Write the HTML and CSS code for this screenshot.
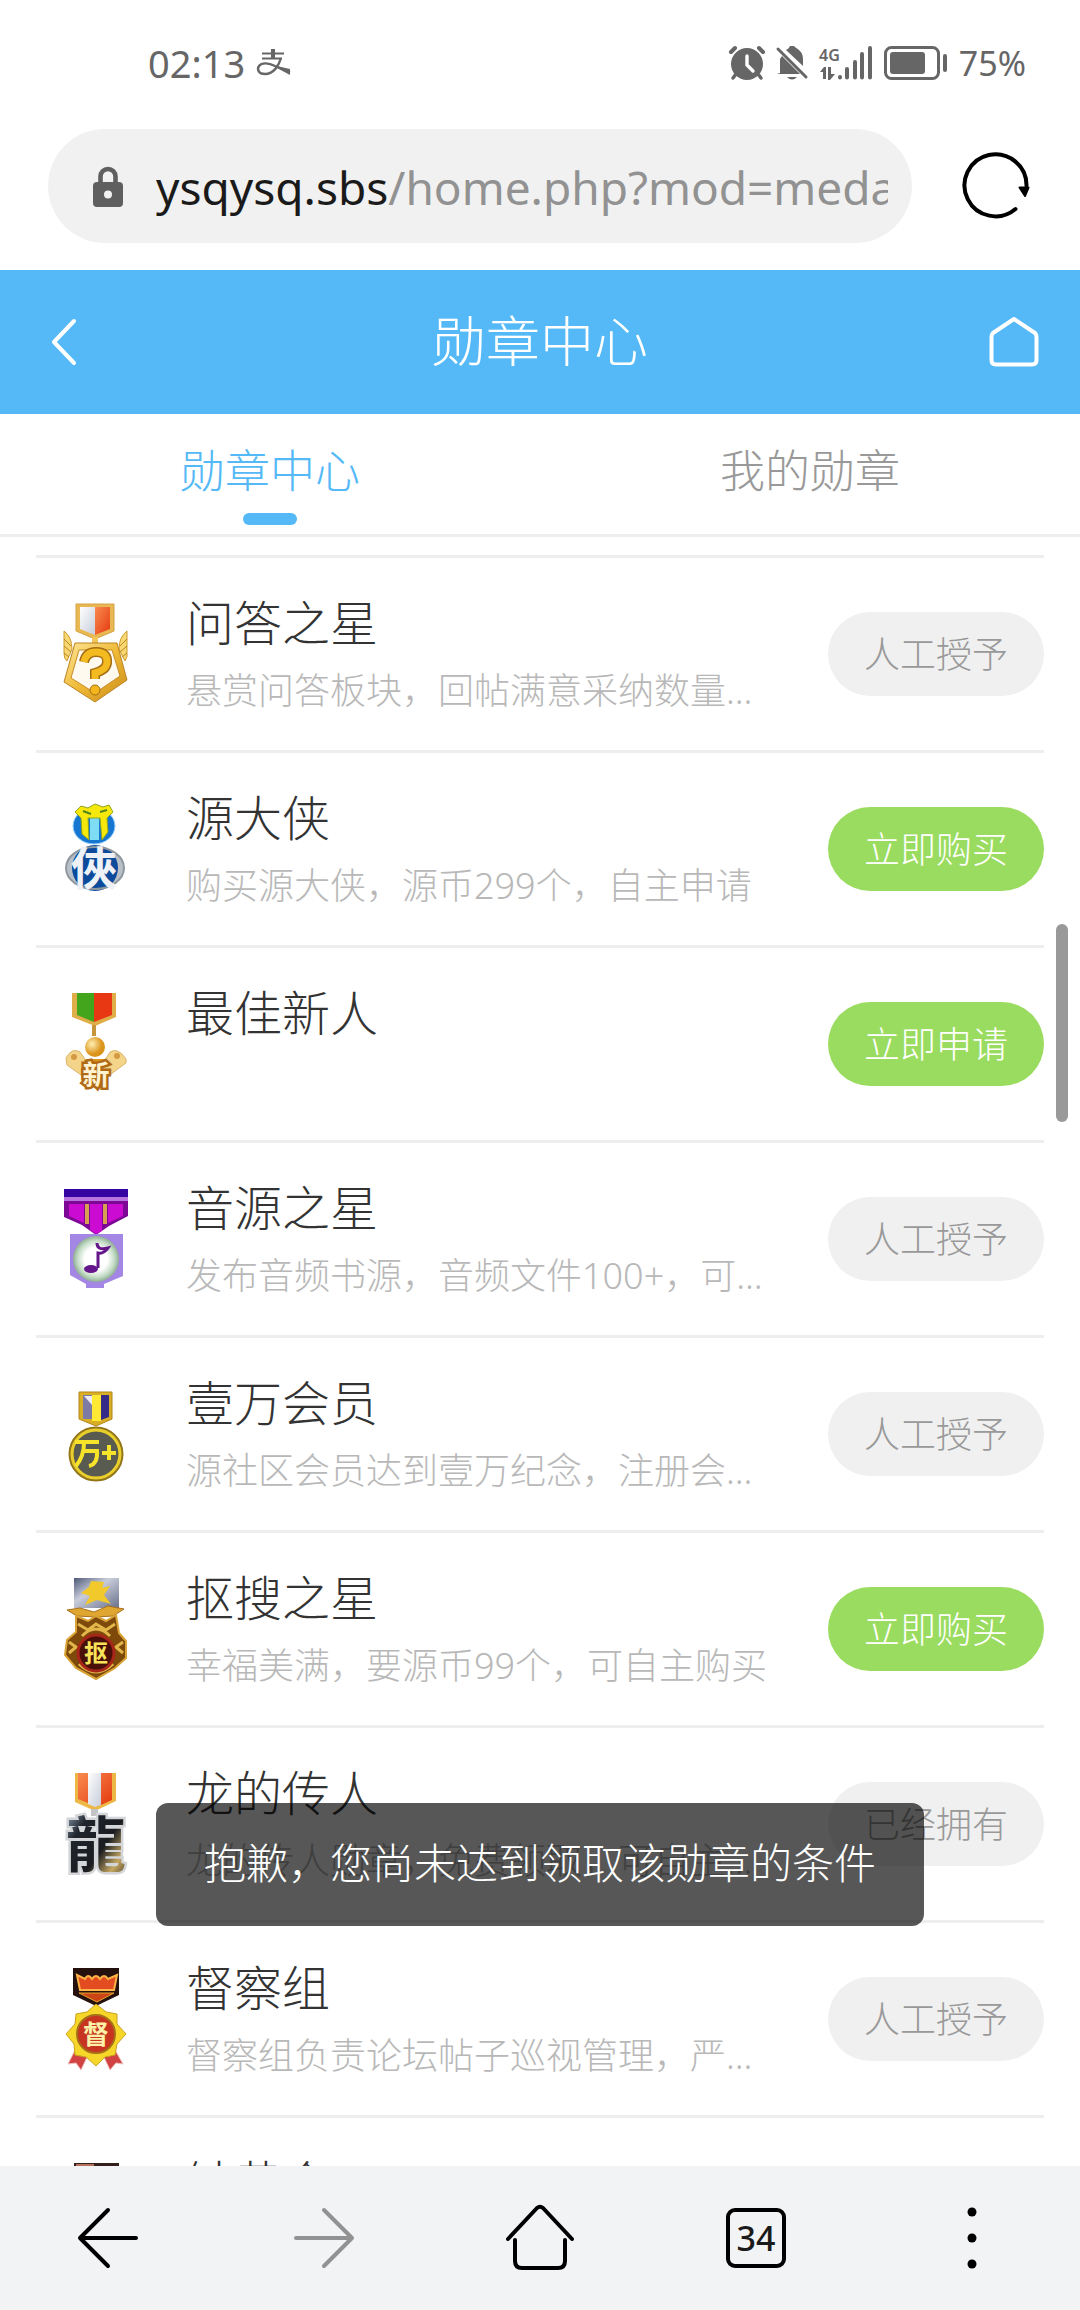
FILE: index.html
```html
<!DOCTYPE html>
<html lang="zh-CN">
<head>
<meta charset="utf-8">
<meta name="viewport" content="width=device-width, initial-scale=1">
<title>勋章中心</title>
<link rel="stylesheet" href="styles.css">
</head>
<body>
<div class="statusbar">
  <div class="status-left">
    <span class="clock">02:13</span>
    <svg class="pay-icon" width="34" height="27" viewBox="0 0 34 27" fill="none" stroke="#666"><path d="M5 4.500h22M5 9.500h20" stroke-width="2"/><path d="M16 0v10" stroke-width="4"/><path d="M24 9C22 16 17 25 8 25C1 25 0 20 2 17C5 13 12 14 18 17L33 23" stroke-width="2.400"/><path d="M17 16.500L33 20v6L20 19z" fill="#666" stroke="none"/></svg>
  </div>
  <div class="status-right">
    <svg width="36" height="34" viewBox="0 0 36 34"><circle cx="18" cy="18" r="16" fill="#666"/><path d="M2 6L6 2M34 6L30 2" stroke="#666" stroke-width="4" stroke-linecap="round"/><path d="M7 28L4 32M29 28L32 32" stroke="#666" stroke-width="3.500" stroke-linecap="round"/><path d="M18 10v9l6 6" stroke="#fff" stroke-width="3.400" fill="none" stroke-linecap="round"/></svg>
    <svg width="32" height="34" viewBox="0 0 32 34" fill="#666"><path d="M4 27V13L6 10L24 28H1zM10 4C12 3 13 2 14 0h4C20 3 27 4 27 13v7zM11 31h10q-5 5-10 0z"/><path d="M2 3L30 31" stroke="#666" stroke-width="3" stroke-linecap="round"/></svg>
    <svg width="54" height="34" viewBox="0 0 54 34" fill="#666"><text class="net" x="0" y="15">4G</text><path d="M1 26L5 21h2v12H4v-7zM9 21h3v7h4l-5 6H9z"/><g stroke="#666" stroke-width="4" stroke-linecap="round"><path d="M21 31v.500M28 23v8.500M36 16v15.500M43 8v23.500M51 2v29.500"/></g></svg>
    <svg width="64" height="34" viewBox="0 0 64 34"><rect x="1.500" y="1.500" width="53" height="31" rx="6" fill="none" stroke="#666" stroke-width="3"/><rect x="6" y="6" width="35" height="22" rx="3" fill="#666"/><rect x="59" y="8" width="4" height="18" rx="2" fill="#666"/></svg>
    <span class="battery-text">75%</span>
  </div>
</div>

<div class="addressbar">
  <button class="urlbox" type="button" aria-label="地址栏">
    <svg width="30" height="40" viewBox="0 0 30 40"><path d="M7.500 18V9.500a7.500 7.500 0 0 1 15 0V18" fill="none" stroke="#5f5f5f" stroke-width="4.600"/><rect y="15" width="30" height="25" rx="4" fill="#5f5f5f"/><circle cx="15" cy="27.500" r="4" fill="#f2f2f2"/></svg>
    <span class="url"><span class="host">ysqysq.sbs</span>/home.php?mod=medal</span>
  </button>
  <button class="reload" type="button" aria-label="刷新">
    <svg width="68" height="68" viewBox="0 0 68 68" fill="none" stroke="#000" stroke-width="4" stroke-linecap="round"><path d="M53.500 57A31 31 0 1 1 64.500 34"/><path d="M57.500 35.500h9L63 44z" fill="#000" stroke-width="2" stroke-linejoin="round"/></svg>
  </button>
</div>

<header class="titlebar">
  <a class="title-link" href="#back" aria-label="返回"><svg width="26" height="48" viewBox="0 0 26 48" fill="none" stroke="#fff" stroke-width="4" stroke-linecap="round" stroke-linejoin="round"><path d="M23 3L3 24L23 45"/></svg></a>
  <h1>勋章中心</h1>
  <a class="title-link" href="#home" aria-label="首页"><svg width="50" height="50" viewBox="0 0 50 50" fill="none" stroke="#fff" stroke-width="4" stroke-linejoin="round"><path d="M25 2L46 16Q47.500 17.500 47.500 20V43Q47.500 47.500 43 47.500H7Q2.500 47.500 2.500 43V20Q2.500 17.500 4 16z"/></svg></a>
</header>

<nav class="tabs">
  <a class="tab active" href="#center">勋章中心</a>
  <a class="tab" href="#mine">我的勋章</a>
</nav>

<svg class="defs" width="0" height="0" aria-hidden="true">
  <defs>
    <linearGradient id="gold" x1="0" y1="0" x2="1" y2="1"><stop offset="0" stop-color="#ffe79a"/><stop offset=".5" stop-color="#eeb935"/><stop offset="1" stop-color="#c98a18"/></linearGradient>
    <linearGradient id="red" x1="0" y1="0" x2="1" y2="1"><stop offset="0" stop-color="#f98b4e"/><stop offset="1" stop-color="#e43a10"/></linearGradient>
    <linearGradient id="silver" x1="0" y1="0" x2="1" y2="1"><stop offset="0" stop-color="#ffffff"/><stop offset="1" stop-color="#c6ccd8"/></linearGradient>
    <linearGradient id="steel" x1="0" y1="0" x2="1" y2="1"><stop offset="0" stop-color="#4c5876"/><stop offset=".4" stop-color="#c9cddb"/><stop offset="1" stop-color="#69708a"/></linearGradient>
    <linearGradient id="ink" x1="0" y1="0" x2="1" y2="1"><stop offset="0" stop-color="#b9d3ea"/><stop offset=".3" stop-color="#20242c"/><stop offset=".6" stop-color="#1a1c20"/><stop offset=".8" stop-color="#c5a763"/><stop offset="1" stop-color="#2d281c"/></linearGradient>
    <radialGradient id="pearl"><stop offset=".5" stop-color="#ffffff"/><stop offset=".8" stop-color="#c4dcc6"/><stop offset="1" stop-color="#8fae94"/></radialGradient>
    <radialGradient id="ball" cx=".35" cy=".35"><stop offset="0" stop-color="#fff0b4"/><stop offset="1" stop-color="#dc951c"/></radialGradient>
  </defs>
</svg>

<main class="content">
<ul class="medals">
  <li class="medal">
    <svg class="badge" viewBox="0 0 64 102">
      <path d="M0 28Q8 34 8 46L3 58Q0 56 0 50zM63 28Q55 34 55 46L61 58Q64 54 63 48z" fill="#f7d872" stroke="#cf9a2c"/>
      <path d="M0 36l7 7M0 43l7 6M0 50l5 4M63 36l-7 7M63 43l-7 6M63 50l-5 4" stroke="#b98321"/>
      <path d="M12 1h38v27L31 36L12 28z" fill="#eab853" stroke="#d3a244"/>
      <path d="M16 4h15v28l-15-6z" fill="url(#silver)"/><path d="M31 4h15v22l-15 6z" fill="url(#red)"/>
      <path d="M28 34h6v8h-6z" fill="#f0c65a"/>
      <path d="M11 40h42l10 37L31 99L0 79z" fill="url(#gold)" stroke="#bb8424"/>
      <path d="M15 47h33l8 26L31 90L7 75z" fill="#fffaf0" stroke="#c78d27"/>
      <path d="M20 59Q22 49 32 49Q44 49 43 60Q42 67 31 70v6" fill="none" stroke="#a66d12" stroke-width="10"/>
      <path d="M20 59Q22 49 32 49Q44 49 43 60Q42 67 31 70v6" fill="none" stroke="#f3bb20" stroke-width="7"/>
      <circle cx="31" cy="87" r="5" fill="#f3b61c" stroke="#a66d12"/>
    </svg>
    <div class="info"><h2>问答之星</h2><p>悬赏问答板块，回帖满意采纳数量达到要求</p></div>
    <button class="action" type="button">人工授予</button>
  </li>
  <li class="medal">
    <svg class="badge" viewBox="0 0 64 102">
      <ellipse cx="30" cy="28" rx="21" ry="18" fill="#1677d2" stroke="#9ad2fa"/>
      <path d="M26 15h9v27h-9z" fill="#7fdcf5"/>
      <path d="M11 14L17 8L24 10L31 6L39 9L45 7L49 14L43 20L44 34L38 42L36 20H24L25 42L18 36L17 20z" fill="#f7e80c" stroke="#8fa51d"/>
      <path d="M19 13l8 3M36 14l7-2" stroke="#52861f" stroke-width="2"/>
      <ellipse cx="31" cy="70" rx="29" ry="21" fill="#b9c0c8"/>
      <circle cx="31" cy="70" r="23" fill="#0c4a9c"/>
      <ellipse cx="31" cy="70" rx="29" ry="21" fill="none" stroke="#8f989f" stroke-width="2"/>
      <text class="glyph silver" x="30" y="87">俠</text>
    </svg>
    <div class="info"><h2>源大侠</h2><p>购买源大侠，源币299个，自主申请</p></div>
    <button class="action go" type="button">立即购买</button>
  </li>
  <li class="medal">
    <svg class="badge" viewBox="0 0 64 102">
      <path d="M8 0h44v24L31 33L8 24z" fill="#dfae48"/><path d="M13 0h17v29l-17-7z" fill="#43a51c"/><path d="M30 0h18v22l-18 7z" fill="#e83713"/>
      <path d="M30 32v11" stroke="#c7953a" stroke-width="4"/>
      <path d="M2 65Q8 54 16 59L25 72L20 84L3 72zM62 66Q54 54 46 59L38 72L43 84L62 70z" fill="#f3d489" stroke="#dcb46a"/>
      <circle cx="10" cy="64" r="3" fill="#d49943"/><circle cx="53" cy="63" r="3" fill="#d49943"/>
      <circle cx="31" cy="54" r="10" fill="url(#ball)"/>
      <path d="M22 66h20v8H22z" fill="#dc951c"/>
      <text class="glyph newbie" x="32" y="92">新</text>
    </svg>
    <div class="info"><h2>最佳新人</h2></div>
    <button class="action go" type="button">立即申请</button>
  </li>
  <li class="medal">
    <svg class="badge" viewBox="0 0 64 102">
      <path d="M0 1h64v9H0z" fill="#3405a0"/><path d="M0 9h64v4H0z" fill="#b875dd"/>
      <path d="M0 13h64v15L45 38L32 47L18 37L0 29z" fill="#7d0895"/><path d="M5 16h15v19L5 28zM26 16h12v27l-6 3l-6-4zM44 16h15v12l-15 7z" fill="#cb0bd2"/>
      <path d="M23 16v20M41 16v20" stroke="#d8a050" stroke-width="4"/>
      <path d="M6 46h53v42L40 96v4H22v-4L6 87z" fill="#a486e5"/>
      <circle cx="32" cy="71" r="23" fill="url(#pearl)"/>
      <path d="M33 55q0 8 11 5q-4 6-10 5v15" fill="none" stroke="#65168b" stroke-width="3"/><ellipse cx="27" cy="81" rx="7" ry="4" fill="#65168b"/>
    </svg>
    <div class="info"><h2>音源之星</h2><p>发布音频书源，音频文件100+，可申请获得</p></div>
    <button class="action" type="button">人工授予</button>
  </li>
  <li class="medal">
    <svg class="badge" viewBox="0 -9 64 102">
      <path d="M15 0h33v27L32 34L15 27z" fill="#d8ae24" stroke="#b3851e"/><path d="M19 3h9v24h-9z" fill="#7d7ba6"/><path d="M20 4h8v9z" fill="#eceaf6"/><path d="M28 3h9v26h-9z" fill="#ffe935"/><path d="M37 3h8v22l-8 3z" fill="#352a88"/>
      <circle cx="32" cy="62" r="25" fill="#595b50" stroke="#927619" stroke-width="5"/>
      <circle cx="32" cy="62" r="24" fill="none" stroke="#e8cf2d" stroke-width="3"/>
      <path d="M11 50h24M20 51Q20 64 12 74M20 59h13Q34 72 25 74" fill="none" stroke="#f7e32a" stroke-width="4"/>
      <path d="M45 53v15M38 61h14" stroke="#f7e32a" stroke-width="4"/>
    </svg>
    <div class="info"><h2>壹万会员</h2><p>源社区会员达到壹万纪念，注册会员均可获得</p></div>
    <button class="action" type="button">人工授予</button>
  </li>
  <li class="medal">
    <svg class="badge" viewBox="0 0 64 102">
      <path d="M10 0h45v30H10z" fill="url(#steel)"/>
      <path d="M17 15L25 9L27 3L40 4L38 10L46 8L40 17L47 26L33 22L21 27L26 18z" fill="#f1c92b"/>
      <path d="M3 32L16 30L30 34L44 28L60 31L49 38L32 39L13 38z" fill="#dfa631" stroke="#a9701a"/>
      <path d="M12 38L24 43L32 38L42 43L52 37L55 55L62 63V80L51 90L32 101L12 90L1 77L3 62L12 54z" fill="#7d4a0c" stroke="#d9a336" stroke-width="2"/>
      <path d="M14 46l10 6l8-6l10 6l9-6M18 58q14-14 28 0M5 64l7 5l-7 6M59 64l-7 5l7 6M15 86q17 16 34 0" fill="none" stroke="#e3b64a" stroke-width="3"/>
      <circle cx="32" cy="75" r="18" fill="#491009" stroke="#a72619" stroke-width="3"/>
      <text class="glyph pick" x="32" y="84">抠</text>
    </svg>
    <div class="info"><h2>抠搜之星</h2><p>幸福美满，要源币99个，可自主购买</p></div>
    <button class="action go" type="button">立即购买</button>
  </li>
  <li class="medal">
    <svg class="badge" viewBox="0 0 64 102">
      <path d="M11 0h41v28L31 38L11 29z" fill="#edb746"/><path d="M14 0h10v30l-10-4zM37 0h11v27l-11 5z" fill="url(#red)"/><path d="M24 0h13v32l-6 2l-7-3z" fill="url(#silver)"/>
      <path d="M27 36h7v7h-7z" fill="#c2c4c6"/>
      <text class="glyph dragon" x="32" y="94">龍</text>
    </svg>
    <div class="info"><h2>龙的传人</h2><p>龙的传人勋章，免费领取，可自主申请</p></div>
    <button class="action" type="button">已经拥有</button>
  </li>
  <li class="medal">
    <svg class="badge" viewBox="0 0 64 102">
      <path d="M9 0h46v27L32 38L9 27z" fill="#24100c"/>
      <path d="M13 7l8 4q3-6 7 0q4-6 8 0q4-6 8 0l9-4l-3 15H16z" fill="#e24c20" stroke="#ffb347" stroke-width="2"/>
      <path d="M15 25h35l-17 9z" fill="#ca4415" stroke="#e9a12c"/>
      <path d="M12 80L4 96L12 95L17 102L25 85zM50 80L59 96L52 95L46 102L38 85z" fill="#d14343" stroke="#f3bebe"/>
      <path d="M32 36L42 44L53 46L53 56L62 66L53 76L51 87L41 89L32 98L22 89L11 87L10 76L2 66L11 56L12 46L23 44z" fill="#f6d729" stroke="#cba120"/>
      <circle cx="32" cy="66" r="19" fill="#c73521" stroke="#a66e18" stroke-width="2"/>
      <text class="glyph inspect" x="32" y="76">督</text>
    </svg>
    <div class="info"><h2>督察组</h2><p>督察组负责论坛帖子巡视管理，严格执行版规</p></div>
    <button class="action" type="button">人工授予</button>
  </li>
  <li class="medal">
    <svg class="badge" viewBox="0 0 64 102"><path d="M10 0h45v28L32 38L10 28z" fill="#33201a"/><path d="M12 1h18v24H12z" fill="#b5705d"/></svg>
    <div class="info"><h2>钟黄会</h2></div>
    <button class="action" type="button">人工授予</button>
  </li>
</ul>
<div class="scrollbar"></div>
<div class="toast" role="alert">抱歉，您尚未达到领取该勋章的条件</div>
</main>

<nav class="toolbar">
  <button type="button" aria-label="后退"><svg width="64" height="64" viewBox="0 0 64 64" fill="none" stroke="#000" stroke-width="4" stroke-linecap="round" stroke-linejoin="round"><path d="M60 32H4M32 4L4 32L32 60"/></svg></button>
  <button type="button" aria-label="前进"><svg width="64" height="64" viewBox="0 0 64 64" fill="none" stroke="#929292" stroke-width="4" stroke-linecap="round" stroke-linejoin="round"><path d="M4 32H60M32 4L60 32L32 60"/></svg></button>
  <button type="button" aria-label="主页"><svg width="72" height="68" viewBox="0 0 72 68" fill="none" stroke="#000" stroke-width="4" stroke-linecap="round" stroke-linejoin="round"><path d="M4 35L33 4Q36 1.500 39 4L68 35"/><path d="M11 36V57Q11 64 18 64H54Q61 64 61 57V36"/></svg></button>
  <button type="button" aria-label="标签页"><span class="tabcount">34</span></button>
  <button type="button" aria-label="菜单"><svg width="10" height="62" viewBox="0 0 10 62"><circle cx="5" cy="5" r="4.500"/><circle cx="5" cy="31" r="4.500"/><circle cx="5" cy="57" r="4.500"/></svg></button>
</nav>
</body>
</html>
```
FILE: styles.css
```css
* { box-sizing: border-box; }

body {
  margin: 0;
  height: 100vh;
  display: flex;
  flex-direction: column;
  background: #fff;
  color: #333;
  font-family: "Noto Sans", "Noto Sans CJK SC", sans-serif;
  font-weight: 300;
  overflow: hidden;
}

button {
  border: 0;
  padding: 0;
  background: none;
  font: inherit;
  color: inherit;
  cursor: pointer;
}

a { color: inherit; text-decoration: none; }
h1, h2, p, ul { margin: 0; padding: 0; font-weight: inherit; }
svg { display: block; flex: none; overflow: visible; }
.defs { position: absolute; }

/* Phone status bar */
.statusbar {
  flex: none;
  height: 129px;
  padding: 0 54px 4px 148px;
  display: flex;
  justify-content: space-between;
  align-items: center;
  color: #666;
  font-weight: 400;
  font-size: 38px;
}
.status-left { display: flex; align-items: center; gap: 12px; }
.status-right { display: flex; align-items: center; gap: 11px; }
.net { font-size: 16px; font-weight: 600; fill: #666; }
.battery-text { font-size: 34px; }

/* Browser address bar */
.addressbar {
  flex: none;
  height: 141px;
  padding: 0 50px 27px 48px;
  display: flex;
  align-items: center;
  gap: 50px;
}
.urlbox {
  flex: 1;
  min-width: 0;
  height: 114px;
  padding: 2px 24px 0 45px;
  display: flex;
  align-items: center;
  gap: 33px;
  border-radius: 57px;
  background: #f1f1f1;
}
.url {
  flex: 1;
  overflow: hidden;
  white-space: nowrap;
  text-align: left;
  font-weight: 400;
  font-size: 46px;
  line-height: 72px;
  color: #929292;
}
.host { color: #1a1a1a; }

/* Page title bar */
.titlebar {
  flex: none;
  height: 144px;
  padding: 0 41px 0 51px;
  display: flex;
  align-items: center;
  justify-content: space-between;
  background: #54b9f6;
  color: #fff;
}
.title-link:first-child { width: 40px; }
.titlebar h1 {
  padding-bottom: 2px;
  font-size: 54px;
  line-height: 72px;
}

/* Tabs */
.tabs {
  flex: none;
  height: 123px;
  display: flex;
  border-bottom: 3px solid #eee;
  font-size: 45px;
  line-height: 60px;
  color: #999;
}
.tab {
  flex: 1;
  display: flex;
  flex-direction: column;
  align-items: center;
  gap: 12px;
  padding-top: 27px;
}
.tab.active { color: #54b9f6; }
.tab.active::after {
  content: "";
  width: 54px;
  height: 12px;
  border-radius: 6px;
  background: currentColor;
}

/* Medal list */
.content {
  position: relative;
  flex: 1;
  min-height: 0;
  overflow: hidden;
}
.medals { list-style: none; padding: 18px 36px 0; }
.medal {
  height: 195px;
  padding-left: 28px;
  display: flex;
  align-items: flex-start;
  border-top: 3px solid #eee;
}
.badge { width: 64px; height: 102px; margin-top: 45px; }
.info {
  flex: 1;
  min-width: 0;
  margin: 33px 54px 0 58px;
}
.info h2 { font-size: 48px; line-height: 64px; }
.info p {
  font-size: 36px;
  line-height: 72px;
  color: #b8b8b8;
  white-space: nowrap;
  overflow: hidden;
  text-overflow: ellipsis;
}
.action {
  width: 216px;
  height: 84px;
  padding-bottom: 3px;
  margin-top: 54px;
  border-radius: 42px;
  background: #f0f0f0;
  color: #999;
  font-size: 36px;
}
.action.go { background: #9adc60; color: #fff; }

.glyph {
  font-family: "Noto Sans CJK TC", "Noto Sans CJK SC", sans-serif;
  font-weight: 700;
  text-anchor: middle;
}
.silver { font-size: 46px; fill: #eef1f5; }
.newbie {
  font-size: 27px;
  fill: #fff3d2;
  stroke: #b06a16;
  stroke-width: 5px;
  paint-order: stroke;
}
.pick { font-size: 24px; fill: #f8e45a; }
.dragon {
  font-size: 60px;
  fill: url(#ink);
  stroke: #d3d5d8;
  stroke-width: 5px;
  paint-order: stroke;
}
.inspect { font-size: 26px; fill: #fdf0a8; }

.scrollbar {
  position: absolute;
  top: 387px;
  right: 12px;
  width: 12px;
  height: 198px;
  border-radius: 6px;
  background: #999;
}
.toast {
  position: absolute;
  left: 50%;
  bottom: 240px;
  transform: translateX(-50%);
  padding: 30px 48px 33px;
  border-radius: 12px;
  background: rgba(0, 0, 0, .66);
  color: #fff;
  font-size: 42px;
  line-height: 60px;
  white-space: nowrap;
}

/* Browser toolbar */
.toolbar {
  flex: none;
  height: 144px;
  display: flex;
  background: #f2f3f5;
}
.toolbar button {
  flex: 1;
  display: flex;
  align-items: center;
  justify-content: center;
}
.tabcount {
  width: 60px;
  height: 60px;
  border: 4px solid #000;
  border-radius: 9px;
  display: flex;
  align-items: center;
  justify-content: center;
  color: #1a1a1a;
  font-size: 34px;
  font-weight: 500;
}
```
